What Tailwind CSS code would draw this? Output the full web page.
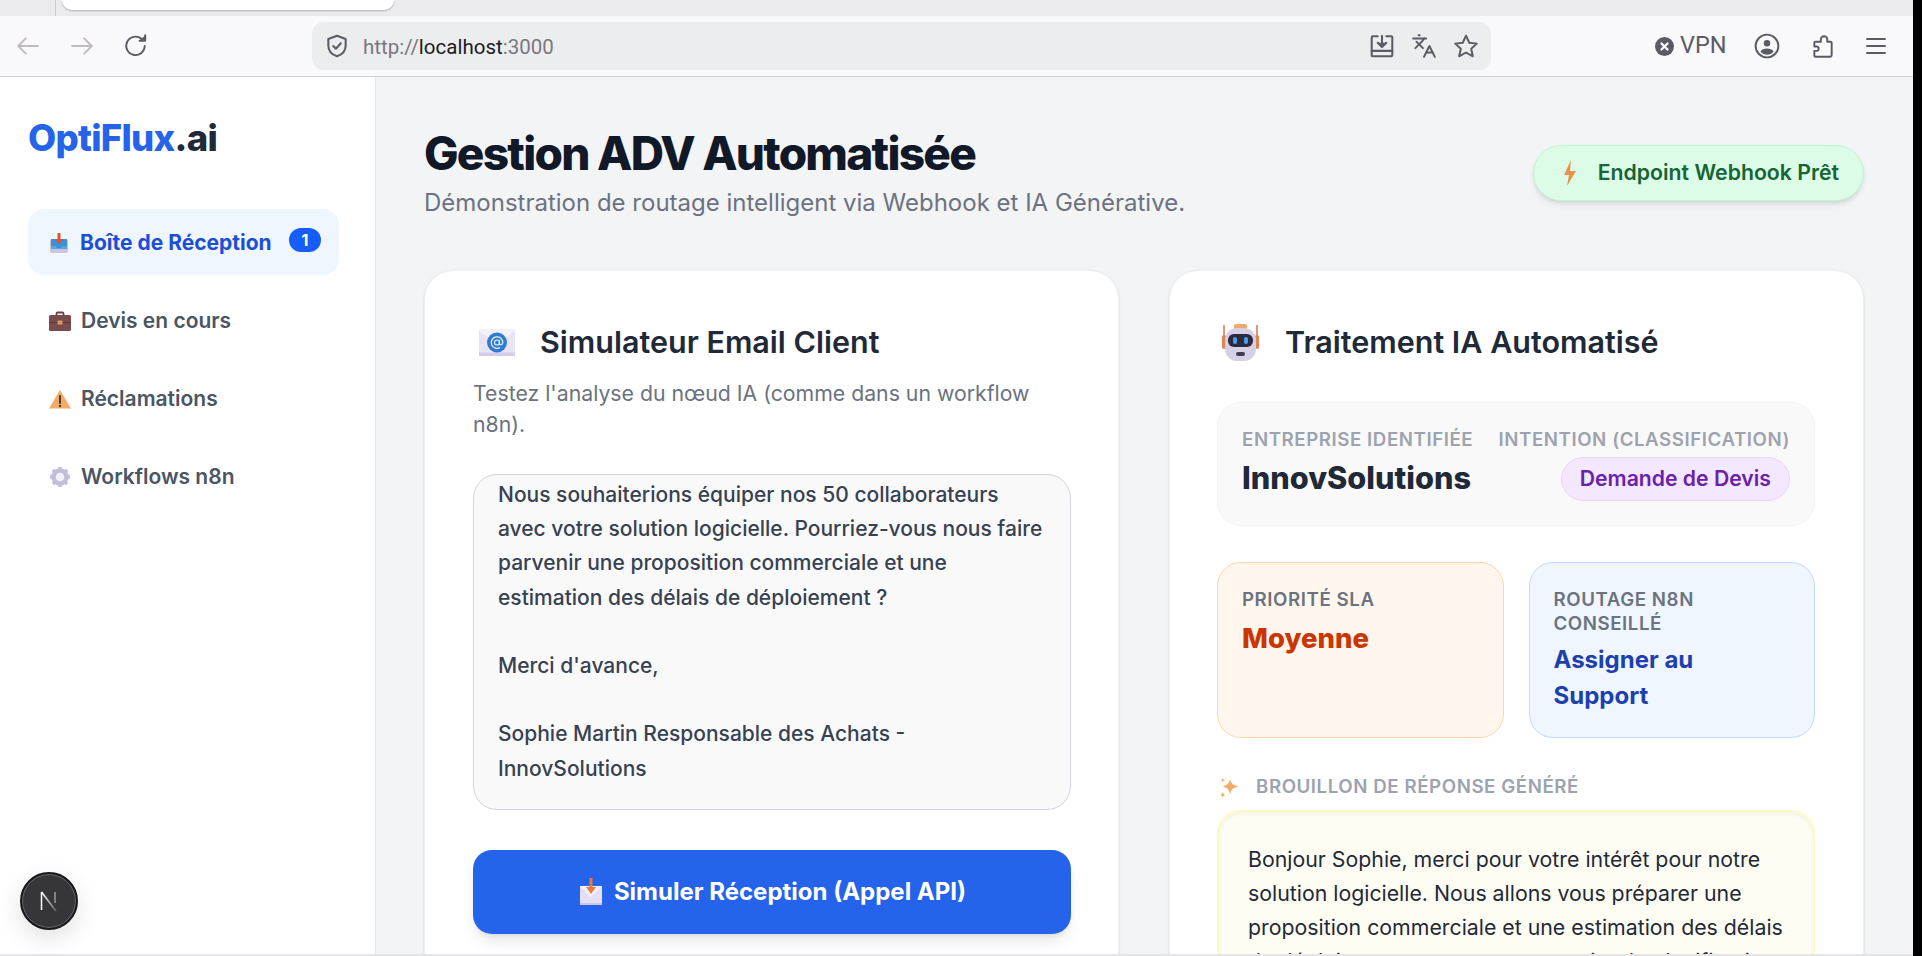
<!DOCTYPE html>
<html lang="fr">
  <head>
    <meta charset="UTF-8" />
    <title>OptiFlux.ai</title>
    <script src="https://cdn.jsdelivr.net/npm/@tailwindcss/browser@4"></script>
  </head>
  <body class="h-[956px] w-[1922px] overflow-hidden bg-black font-[Inter,sans-serif]">
    <div class="relative flex h-[956px] w-[1913px] flex-col overflow-hidden bg-[#e5e5e7]">
      <!-- onglets -->
      <div class="flex h-4 shrink-0 bg-[#ebebed]">
        <div class="ml-[55px] h-4 w-px bg-[#c9c9cd]"></div>
        <div class="ml-[6px] h-[10px] w-[332px] rounded-b-xl bg-white shadow-[0_1px_2px_rgba(0,0,0,0.25)]"></div>
      </div>

      <!-- barre du navigateur -->
      <div class="flex h-[61px] shrink-0 items-center border-b border-[#cfcfd3] bg-[#f9f9fb] text-[#5b5b66]">
        <svg class="ml-[15px] h-[26px] w-[26px] text-[#bfb9c1]" viewBox="0 0 24 24" fill="none" stroke="currentColor" stroke-width="1.7" stroke-linecap="round" stroke-linejoin="round"><path d="M21 12H3" /><path d="m10 5-7 7 7 7" /></svg>
        <svg class="ml-[28px] h-[26px] w-[26px] text-[#bfb9c1]" viewBox="0 0 24 24" fill="none" stroke="currentColor" stroke-width="1.7" stroke-linecap="round" stroke-linejoin="round"><path d="M3 12h18" /><path d="m14 5 7 7-7 7" /></svg>
        <svg class="ml-[28px] h-[26px] w-[26px]" viewBox="0 0 24 24" fill="none" stroke="currentColor" stroke-width="1.8" stroke-linecap="round" stroke-linejoin="round"><path d="M20 12a8.5 8.5 0 1 1-3-6.6" /><path d="M20.5 2v5.2h-5.2" fill="currentColor" /></svg>
        <div class="ml-[163px] flex h-12 w-[1179px] items-center rounded-xl bg-[#ecedef]">
          <svg class="ml-[12px] h-[26px] w-[26px]" viewBox="0 0 24 24" fill="none" stroke="currentColor" stroke-width="1.9" stroke-linecap="round" stroke-linejoin="round"><path d="M12 2.500 20 5.500v6c0 5-3.400 8.400-8 10-4.600-1.600-8-5-8-10v-6z" /><path d="m8.500 12 2.500 2.500 4.500-5" /></svg>
          <span class="ml-[13px] mt-[2px] font-[Roboto,sans-serif] text-[20.500px] text-[#7a7680]">http://<span class="text-[#1c1b22]">localhost</span>:3000</span>
          <svg class="ml-auto h-[26px] w-[26px]" viewBox="0 0 24 24" fill="none" stroke="currentColor" stroke-width="1.9" stroke-linecap="round" stroke-linejoin="round"><path d="M8 3H3.500a1 1 0 0 0-1 1v16a1.500 1.500 0 0 0 1.500 1.500h16a1.500 1.500 0 0 0 1.500-1.500V4a1 1 0 0 0-1-1H16" /><path d="M2.500 16.500h19" /><path d="M12 2.500v10" /><path d="m8 9 4 4 4-4" fill="currentColor" /></svg>
          <svg class="ml-[16px] h-[26px] w-[26px]" viewBox="0 0 24 24" fill="none" stroke="currentColor" stroke-width="1.800" stroke-linecap="round" stroke-linejoin="round"><path d="m5 8 6 6" /><path d="m4 14 6-6 2-3" /><path d="M2 5h12" /><path d="M7 2h1" /><path d="m22 22-5-10-5 10" /><path d="M14 18h6" /></svg>
          <svg class="ml-[16px] mr-[12px] h-[26px] w-[26px]" viewBox="0 0 24 24" fill="none" stroke="currentColor" stroke-width="1.800" stroke-linejoin="round"><path d="M12 2.500 15 9l7 .8-5.200 4.700 1.500 7L12 18l-6.300 3.500 1.500-7L2 9.800 9 9z" /></svg>
        </div>
        <svg class="ml-[164px] h-[19px] w-[19px]" viewBox="0 0 20 20"><circle cx="10" cy="10" r="10" fill="currentColor" /><path d="m6.800 6.800 6.400 6.400m0-6.400-6.400 6.400" stroke="#f9f9fb" stroke-width="2.400" stroke-linecap="round" /></svg>
        <span class="ml-[6px] font-[Roboto,sans-serif] text-[23.500px]">VPN</span>
        <svg class="ml-[27px] h-[26px] w-[26px]" viewBox="0 0 24 24" fill="none" stroke="currentColor" stroke-width="1.800"><circle cx="12" cy="12" r="10.500" /><circle cx="12" cy="9.500" r="3" fill="currentColor" stroke="none" /><path d="M6 17c1-2 3.500-2.700 6-2.700s5 .7 6 2.700c-1.500 2-3.500 3-6 3s-4.500-1-6-3z" fill="currentColor" stroke="none" /></svg>
        <svg class="ml-[30px] h-[26px] w-[26px]" viewBox="0 0 24 24" fill="none" stroke="currentColor" stroke-width="1.800" stroke-linejoin="round"><path d="M4 21a1 1 0 0 0 1 1h13a2 2 0 0 0 2-2V9a1 1 0 0 0-1-1h-3V6a3 3 0 0 0-6 0v2H5a1 1 0 0 0-1 1v3.500h2a2 2 0 0 1 0 4H4z" /></svg>
        <svg class="ml-[29px] h-[22px] w-[22px]" viewBox="0 0 22 22" fill="none" stroke="currentColor" stroke-width="2" stroke-linecap="round"><path d="M2 4h18M2 11h18M2 18h18" /></svg>
      </div>

      <div class="mb-[2px] flex min-h-0 flex-1">
        <!-- menu lateral -->
        <aside class="flex w-[376px] shrink-0 flex-col border-r border-[#e5e7eb] bg-white pl-[28px] pr-[36px] pt-[36px]">
          <div class="text-[36.500px] font-extrabold leading-[50px] tracking-[-0.02em] text-[#1f2937]"><span class="text-[#2563eb]">OptiFlux</span>.ai</div>
          <nav class="mt-[46px] flex flex-col gap-3 text-[21px] font-semibold text-[#4b5563]">
            <a class="flex h-[66px] items-center rounded-2xl bg-[#eff6ff] pl-[21px] pr-[18px] pt-[1px] font-bold text-[#1d4ed8]">
              <svg class="mr-[11px] h-[22px] w-[20px] shrink-0" viewBox="0 0 20 22"><path d="M1 8h18v11a2 2 0 0 1-2 2H3a2 2 0 0 1-2-2z" fill="#c9c5dc" /><path d="M2 7h16v10H2z" fill="#3f8fd6" /><path d="M2 14h5l1 2h4l1-2h5v3H2z" fill="#5aa5e4" /><path d="M8.500 1h3v6h2.500L10 12 6 7h2.500z" fill="#d9562b" /></svg>
              <span>Boîte de Réception</span>
              <span class="mb-[6px] ml-auto flex h-6 w-8 items-center justify-center rounded-full bg-[#155dfc] text-[16px] font-bold text-white">1</span>
            </a>
            <a class="flex h-[66px] items-center pl-[21px] pt-[2px]">
              <svg class="mr-[10px] h-[22px] w-[22px] shrink-0" viewBox="0 0 22 22"><path d="M7.500 6V3.500a1 1 0 0 1 1-1h5a1 1 0 0 1 1 1V6" fill="none" stroke="#6f4648" stroke-width="1.800" /><rect y="5" width="22" height="16" rx="1.500" fill="#7b4c4e" /><path d="M0 12.500h22" stroke="#5e393b" stroke-width="1" /><rect x="8.500" y="10.500" width="5" height="4" rx=".6" fill="#d79b62" /></svg>
              <span>Devis en cours</span>
            </a>
            <a class="flex h-[66px] items-center pl-[21px] pt-[2px]">
              <svg class="mr-[10px] h-[22px] w-[22px] shrink-0" viewBox="0 0 22 22"><path d="M11 2 22 20.500H0z" fill="#f4ab63" /><path d="M11 8v7" stroke="#4b3b3b" stroke-width="2" stroke-linecap="round" /><circle cx="11" cy="18" r="1.200" fill="#4b3b3b" /></svg>
              <span>Réclamations</span>
            </a>
            <a class="flex h-[66px] items-center pl-[21px] pt-[2px]">
              <svg class="mr-[10px] h-[22px] w-[22px] shrink-0" viewBox="0 0 22 22"><circle cx="11" cy="11" r="6.500" fill="#f2f0f8" stroke="#c3bddb" stroke-width="4.500" /><path d="M11 1v4M11 17v4M1 11h4M17 11h4M3.900 3.900l2.800 2.800M15.300 15.300l2.800 2.800M18.100 3.900l-2.800 2.800M6.700 15.300l-2.800 2.800" stroke="#c3bddb" stroke-width="3.400" /></svg>
              <span>Workflows n8n</span>
            </a>
          </nav>
        </aside>

        <!-- contenu -->
        <main class="min-w-0 flex-1 overflow-hidden bg-[#f3f4f6] pl-[48px] pr-[49px]">
          <header class="flex items-start justify-between pt-[46px]">
            <div>
              <h1 class="text-[46px] font-extrabold leading-[60px] tracking-[-0.038em] text-[#111827]">Gestion ADV Automatisée</h1>
              <p class="mt-[4px] text-[24px] leading-[32px] text-[#6b7280]">Démonstration de routage intelligent via Webhook et IA Générative.</p>
            </div>
            <div class="mt-[22px] flex h-[56px] items-center rounded-full border border-[#bbf7d0] bg-[#dcfce7] pl-[29px] pr-[24px] text-[21.250px] font-semibold text-[#166534] shadow-md">
              <svg class="mr-[21px] h-[26px] w-[14px]" viewBox="0 0 14 26"><path d="M8 0 1 15h5l-2 11 9-15H7z" fill="#ea924c" /></svg>
              Endpoint Webhook Prêt
            </div>
          </header>

          <div class="mt-[51px] grid grid-cols-2 gap-[50px]">
            <!-- simulateur -->
            <section class="h-[760px] rounded-[29px] border border-[#eceef1] bg-white pl-[48px] pr-[47px] pt-[49px] shadow-sm">
              <div class="flex items-center">
                <svg class="ml-[6px] mr-[25px] h-[27px] w-[36px] shrink-0" viewBox="0 0 36 27"><rect width="36" height="27" rx="1.500" fill="#e9e4f5" /><path d="M0 2 18 15 36 2v-2H0z" fill="#f3f0fa" /><rect y="23.500" width="36" height="3.500" fill="#d4cce8" /><circle cx="18" cy="13.500" r="10" fill="#2f7bd2" /><circle cx="18" cy="13.500" r="2.500" fill="none" stroke="#e8f1fb" stroke-width="1.200" /><path d="M20.500 11v3.500c0 2 3.300 1.500 3.300-1a5.800 5.800 0 1 0-2.700 5" fill="none" stroke="#e8f1fb" stroke-width="1.200" /></svg>
                <h2 class="text-[30.500px] font-semibold leading-[44px] text-[#1f2937]">Simulateur Email Client</h2>
              </div>
              <p class="mt-[14px] text-[21.250px] leading-[31px] text-[#6b7280]">Testez l'analyse du nœud IA (comme dans un workflow n8n).</p>
              <div class="mt-[34px] h-[336px] overflow-hidden rounded-3xl border border-[#d1d5db] bg-[#f9f9fa] px-[24px] pt-[3px] text-[21px] font-medium leading-[34.200px] text-[#374151]">
                <p>Nous souhaiterions équiper nos 50 collaborateurs avec votre solution logicielle. Pourriez-vous nous faire parvenir une proposition commerciale et une estimation des délais de déploiement ?</p>
                <p class="mt-[34.200px]">Merci d'avance,</p>
                <p class="mt-[34.200px]">Sophie Martin Responsable des Achats - InnovSolutions</p>
              </div>
              <button class="mt-[40px] flex h-[84px] w-full items-center justify-center rounded-[19px] bg-[#2563eb] text-[24px] font-bold text-white shadow-lg">
                <svg class="mr-[10px] h-[28px] w-[26px]" viewBox="0 0 24 28"><path d="M1 8h22v19H1z" fill="#e5dff3" /><path d="M1 8l11 11L23 8z" fill="#f4f1fa" /><path d="M1 25h22v2H1z" fill="#cfc6e4" /><path d="M10.500 0h3v9H17l-5 7-5-7h3.500z" fill="#e8793f" /></svg>
                Simuler Réception (Appel API)
              </button>
            </section>

            <!-- traitement IA -->
            <section class="h-[760px] rounded-[29px] border border-[#eceef1] bg-white pl-[47px] pr-[48px] pt-[49px] shadow-sm">
              <div class="flex items-center">
                <svg class="ml-[5px] mr-[26px] h-[38px] w-[37px] shrink-0" viewBox="0 0 37 38"><path d="M2 2v18M35 2v18" stroke="#d9764a" stroke-width="1.500" /><rect x="0" y="12" width="4" height="14" rx="2" fill="#e5814e" /><rect x="33" y="12" width="4" height="14" rx="2" fill="#e5814e" /><rect x="12" y="1" width="13" height="6" rx="2" fill="#eeaa66" /><rect x="3" y="5" width="31" height="33" rx="12" fill="#d6d0e6" /><rect x="6" y="11" width="25" height="13" rx="6" fill="#2c2a3e" /><rect x="11" y="14" width="4" height="7" rx="2" fill="#4c9cf0" /><rect x="22" y="14" width="4" height="7" rx="2" fill="#4c9cf0" /><rect x="14" y="29" width="9" height="4" rx="2" fill="#3f3a52" /></svg>
                <h2 class="text-[30.500px] font-semibold leading-[44px] text-[#1f2937]">Traitement IA Automatisé</h2>
              </div>

              <div class="mt-[38px] flex h-[124px] items-start justify-between rounded-3xl border border-[#f3f4f6] bg-[#f9f9fa] px-[24px] pt-[25px]">
                <div>
                  <div class="text-[18.700px] font-semibold uppercase leading-[24px] tracking-[0.03em] text-[#9ca3af]">Entreprise identifiée</div>
                  <div class="mt-[6px] text-[30.700px] font-extrabold leading-[40px] text-[#1f2937]">InnovSolutions</div>
                </div>
                <div class="flex flex-col items-end">
                  <div class="text-[18.700px] font-semibold uppercase leading-[24px] tracking-[0.03em] text-[#9ca3af]">Intention (classification)</div>
                  <div class="mt-[5px] flex h-[44px] items-center rounded-full border border-[#e9d5ff] bg-[#f3e8ff] px-[18px] text-[21.200px] font-semibold text-[#6b21a8]">Demande de Devis</div>
                </div>
              </div>

              <div class="mt-[36px] grid grid-cols-2 gap-[25px]">
                <div class="h-[176px] rounded-3xl border border-[#fed7aa] bg-[#fff7ed] px-[24px] pt-[25px]">
                  <div class="text-[18.700px] font-semibold uppercase leading-[24px] tracking-[0.03em] text-[#6b7280]">Priorité SLA</div>
                  <div class="mt-[7px] text-[27.500px] font-extrabold leading-[38px] text-[#ca3500]">Moyenne</div>
                </div>
                <div class="h-[176px] rounded-3xl border border-[#bfdbfe] bg-[#eff6ff] px-[24px] pt-[25px]">
                  <div class="text-[18.700px] font-semibold uppercase leading-[24px] tracking-[0.03em] text-[#6b7280]">Routage n8n conseillé</div>
                  <div class="mt-[6px] text-[24px] font-bold leading-[36px] text-[#1e40af]">Assigner au Support</div>
                </div>
              </div>

              <div class="mt-[37px] flex items-center text-[18.700px] font-semibold uppercase leading-[24px] tracking-[0.03em] text-[#9ca3af]">
                <svg class="ml-[1px] mr-[17px] h-[21px] w-[21px]" viewBox="0 0 19 20" fill="#f2ae68"><path d="M11 2c.8 4 2.500 5.700 8 7-5.500 1.300-7.200 3-8 8-.8-5-2.500-6.700-7-8 4.500-1.300 6.200-3 7-7z" /><path d="M4 14c.3 1.700 1 2.400 2.500 3C5 17.600 4.300 18.300 4 20c-.3-1.700-1-2.400-2.500-3C3 16.400 3.700 15.700 4 14z" /><path d="M4 1c.2 1.200.8 1.800 2 2-1.200.3-1.800.9-2 2-.2-1.100-.8-1.700-2-2 1.200-.2 1.800-.8 2-2z" /></svg>
                Brouillon de réponse généré
              </div>
              <div class="mt-[11px] h-[200px] rounded-3xl border-2 border-[#fef9c3] bg-[#fefdf3] pl-[29px] pr-[20px] pt-[30px] text-[21.300px] leading-[34px] text-[#1f2937] shadow-[inset_0_2px_4px_rgba(0,0,0,0.05)]">
                Bonjour Sophie, merci pour votre intérêt pour notre solution logicielle. Nous allons vous préparer une proposition commerciale et une estimation des délais de déploiement sous peu et un point de planification dans les
              </div>
            </section>
          </div>
        </main>
      </div>

      <!-- badge Next.js -->
      <div class="absolute bottom-[26px] left-[20px] flex h-[58px] w-[58px] items-center justify-center rounded-full border-2 border-[#17171c] bg-[#36363a] shadow-[0_8px_24px_rgba(0,0,0,0.12),inset_0_0_0_1px_rgba(255,255,255,0.25)]">
        <svg class="h-[22px] w-[22px]" viewBox="0 0 22 22"><defs><linearGradient id="nb" x1="0" y1="0" x2="1" y2="1"><stop offset="0" stop-color="#fff" /><stop offset="1" stop-color="#fff" stop-opacity="0.2" /></linearGradient></defs><path d="M3.500 2v18" stroke="#fff" stroke-width="1.500" /><path d="M3.500 2 18 21" stroke="url(#nb)" stroke-width="1.800" /><path d="M17 2v11" stroke="#fff" stroke-opacity="0.5" stroke-width="1.500" /></svg>
      </div>
    </div>
  </body>
</html>
